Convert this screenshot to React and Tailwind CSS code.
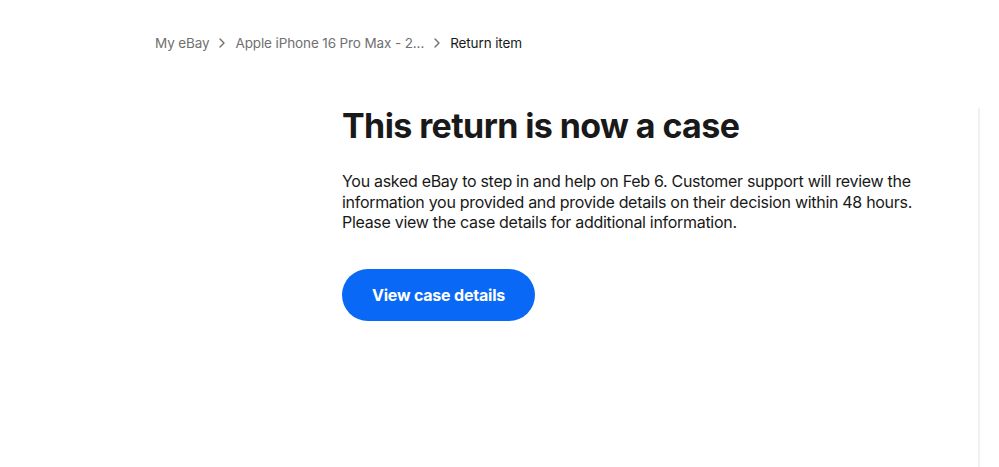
import React from "react";

const Chevron = () => (
  <svg width="8" height="10" viewBox="0 0 8 10" className="mx-[9px] shrink-0" fill="none">
    <path d="M2 1l4 4-4 4" stroke="#707070" strokeWidth="1.4" strokeLinecap="round" strokeLinejoin="round" />
  </svg>
);

export default function App() {
  return (
    <div className="relative w-[999px] h-[467px] bg-white overflow-hidden" style={{ fontFamily: "Inter, 'Open Sans', Arial, sans-serif" }}>
      <nav className="flex items-center pl-[155px] pt-[34px] h-[52px] text-[13.5px] leading-[18px] tracking-[-0.12px]">
        <span className="text-[#707070]">My eBay</span>
        <Chevron />
        <span className="text-[#707070]">Apple iPhone 16 Pro Max - 2...</span>
        <Chevron />
        <span className="text-[#191919]">Return item</span>
      </nav>
      <main className="pl-[342px] pt-[53px]">
        <h1 className="text-[34px] leading-[42px] font-bold text-[#191919] tracking-[-0.6px]">This return is now a case</h1>
        <p className="mt-[24px] w-[585px] text-[16px] leading-[20.5px] text-[#191919] tracking-[-0.3px]">
          You asked eBay to step in and help on Feb 6. Customer support will review the information you provided and provide details on their decision within 48 hours. Please view the case details for additional information.
        </p>
        <button className="mt-[36px] h-[52px] w-[193px] rounded-full bg-[#0968f6] text-white text-[16px] font-bold tracking-[-0.2px]">
          View case details
        </button>
      </main>
      <div className="absolute left-[978px] top-[108px] bottom-0 w-[2px] bg-[#f0f0f0]" />
    </div>
  );
}
